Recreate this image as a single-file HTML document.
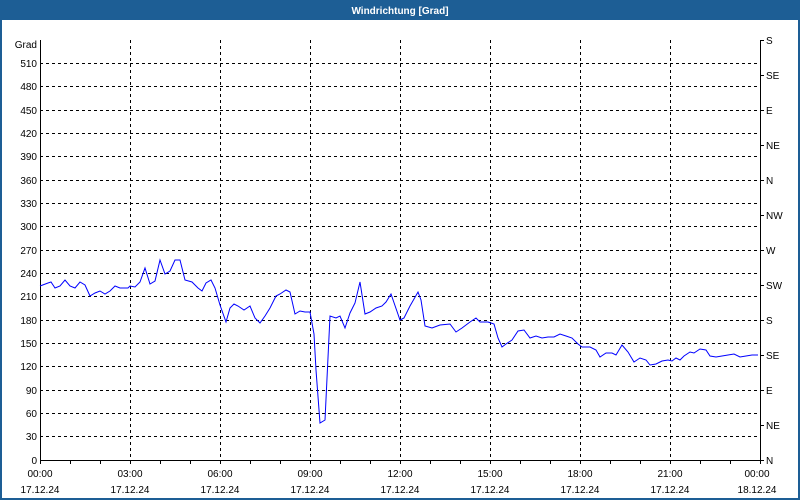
<!DOCTYPE html><html><head><meta charset="utf-8"><style>
html,body{margin:0;padding:0;width:800px;height:500px;overflow:hidden;background:#fff}
svg{display:block}
text{font-family:"Liberation Sans",sans-serif;font-size:10px;fill:#000}
</style></head><body>
<svg width="800" height="500" xmlns="http://www.w3.org/2000/svg">
<rect x="0" y="0" width="800" height="500" fill="#fff"/>
<rect x="0" y="0" width="800" height="20" fill="#1d5e95"/>
<rect x="0" y="20" width="2" height="480" fill="#1d5e95"/>
<rect x="798" y="20" width="2" height="480" fill="#1d5e95"/>
<rect x="0" y="498" width="800" height="2" fill="#1d5e95"/>
<text x="400" y="14" text-anchor="middle" style="fill:#fff;font-weight:bold;font-size:10px">Windrichtung [Grad]</text>
<g stroke="#000" stroke-width="1" stroke-dasharray="3,3" fill="none">
<path d="M40 63.5H760M40 86.5H760M40 110.5H760M40 133.5H760M40 156.5H760M40 180.5H760M40 203.5H760M40 226.5H760M40 250.5H760M40 273.5H760M40 296.5H760M40 320.5H760M40 343.5H760M40 366.5H760M40 390.5H760M40 413.5H760M40 436.5H760"/>
<path d="M130.5 40V460M220.5 40V460M310.5 40V460M400.5 40V460M490.5 40V460M580.5 40V460M670.5 40V460"/>
</g>
<g stroke="#000" stroke-width="1" fill="none">
<path d="M40.5 40V460.5M40 460.5H760.5M760.5 40V460.5"/>
<path d="M70.5 460v4M100.5 460v4M130.5 460v4M160.5 460v4M190.5 460v4M220.5 460v4M250.5 460v4M280.5 460v4M310.5 460v4M340.5 460v4M370.5 460v4M400.5 460v4M430.5 460v4M460.5 460v4M490.5 460v4M520.5 460v4M550.5 460v4M580.5 460v4M610.5 460v4M640.5 460v4M670.5 460v4M700.5 460v4M730.5 460v4M40.5 460v4M760.5 460v4"/>
<path d="M760 40.5h4M760 75.5h4M760 110.5h4M760 145.5h4M760 180.5h4M760 215.5h4M760 250.5h4M760 285.5h4M760 320.5h4M760 355.5h4M760 390.5h4M760 425.5h4M760 460.5h4"/>
</g>
<g text-anchor="end">
<text x="37" y="48">Grad</text>
<text x="37" y="67">510</text><text x="37" y="90">480</text><text x="37" y="114">450</text><text x="37" y="137">420</text><text x="37" y="160">390</text><text x="37" y="184">360</text><text x="37" y="207">330</text><text x="37" y="230">300</text><text x="37" y="254">270</text><text x="37" y="277">240</text><text x="37" y="300">210</text><text x="37" y="324">180</text><text x="37" y="347">150</text><text x="37" y="370">120</text><text x="37" y="394">90</text><text x="37" y="417">60</text><text x="37" y="440">30</text><text x="37" y="464">0</text>
</g>
<g>
<text x="766" y="44">S</text><text x="766" y="79">SE</text><text x="766" y="114">E</text><text x="766" y="149">NE</text><text x="766" y="184">N</text><text x="766" y="219">NW</text><text x="766" y="254">W</text><text x="766" y="289">SW</text><text x="766" y="324">S</text><text x="766" y="359">SE</text><text x="766" y="394">E</text><text x="766" y="429">NE</text><text x="766" y="464">N</text>
</g>
<g text-anchor="middle">
<text x="40" y="477">00:00</text><text x="40" y="493">17.12.24</text>
<text x="130" y="477">03:00</text><text x="130" y="493">17.12.24</text>
<text x="220" y="477">06:00</text><text x="220" y="493">17.12.24</text>
<text x="310" y="477">09:00</text><text x="310" y="493">17.12.24</text>
<text x="400" y="477">12:00</text><text x="400" y="493">17.12.24</text>
<text x="490" y="477">15:00</text><text x="490" y="493">17.12.24</text>
<text x="580" y="477">18:00</text><text x="580" y="493">17.12.24</text>
<text x="670" y="477">21:00</text><text x="670" y="493">17.12.24</text>
<text x="757" y="477">00:00</text><text x="757" y="493">18.12.24</text>
</g>
<polyline fill="none" stroke="#0000ff" stroke-width="1" points="40,286 48,283 51,282 55,288 60,286 65,280 70,286 75,288 80,282 85,285 90,296 95,293 100,291 105,294 110,291 115,286 120,288 128,288 130,286 135,287 140,282 145,268 150,284 155,281 160,260 165,274 170,271 175,260 180,260 185,280 192,282 198,288 202,291 206,283 211,280 215,288 220,305 226,322 230,308 234,304 238,306 244,310 250,306 255,318 260,323 265,316 270,308 276,296 280,294 286,290 290,292 295,314 300,311 305,312 310,312 314,334 316,370 320,423 325,420 330,316 336,318 340,316 345,328 350,313 355,303 360,282 365,314 370,312 376,308 382,306 386,302 391,294 400,320 404,318 410,306 418,292 421,300 425,326 432,328 440,325 450,324 456,332 462,328 470,322 476,318 480,322 488,322 494,324 498,338 502,347 506,344 512,340 518,331 524,330 530,338 536,336 542,338 548,337 554,337 560,334 566,336 572,338 578,344 582,347 590,347 596,350 600,357 606,353 612,353 616,355 622,345 628,352 634,362 640,358 646,360 650,365 656,364 662,361 668,360 672,361 676,358 680,360 684,356 690,352 694,353 700,349 706,350 710,356 716,357 722,356 728,355 734,354 740,357 746,356 752,355 758,355"/>
</svg>
</body></html>
